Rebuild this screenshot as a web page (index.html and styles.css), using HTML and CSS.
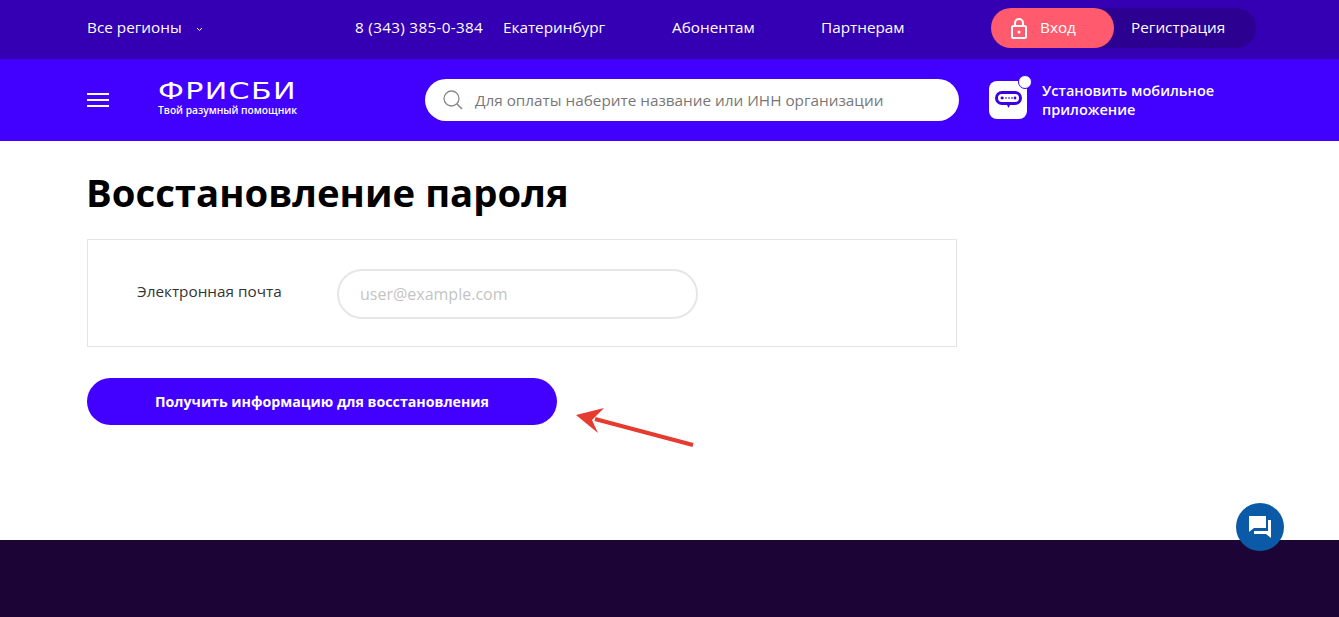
FILE: index.html
```html
<!DOCTYPE html>
<html lang="en">
<head>
    <meta charset="UTF-8">
    <meta name="viewport" content="width=device-width, initial-scale=1.0">
    <title>Восстановление пароля</title>
    <link rel="stylesheet" href="styles.css">
</head>
<body>
    <div class="topbar">
        <a class="region">Все регионы
            <svg class="chevron" width="7" height="5" viewBox="0 0 7 5"><path d="M1 1l2.5 2.5L6 1" fill="none" stroke="#fff" stroke-width="1"/></svg>
        </a>
        <a class="phone">8 (343) 385-0-384</a>
        <a class="city">Екатеринбург</a>
        <a class="top-link subscribers">Абонентам</a>
        <a class="top-link partners">Партнерам</a>
        <div class="auth">
            <a class="login">
                <svg width="16" height="21" viewBox="0 0 16 21"><path d="M4 8V5a4 4 0 0 1 8 0v3" fill="none" stroke="#fff" stroke-width="2"/><rect x="1" y="8" width="14" height="12" rx="1.5" fill="none" stroke="#fff" stroke-width="2"/><circle cx="8" cy="14" r="1.5" fill="#fff"/></svg>
                <span class="login-text">Вход</span>
            </a>
            <a class="register">Регистрация</a>
        </div>
    </div>

    <div class="mainbar">
        <div class="burger"><span></span><span></span><span></span></div>
        <div class="logo">
            <div class="logo-name">ФРИСБИ</div>
            <div class="logo-sub">Твой разумный помощник</div>
        </div>
        <div class="search">
            <svg width="20" height="20" viewBox="0 0 20 20"><circle cx="8.5" cy="8.5" r="7.5" fill="none" stroke="#8a8a8a" stroke-width="1.3"/><path d="M14 14l5 5" stroke="#8a8a8a" stroke-width="1.6"/></svg>
            <span>Для оплаты наберите название или ИНН организации</span>
        </div>
        <div class="app">
            <div class="app-icon">
                <svg width="27" height="18" viewBox="0 0 27 18"><rect x="1.500" y="1.500" width="24" height="11" rx="5.500" fill="none" stroke="#3d00e0" stroke-width="3"/><path d="M7 7h13" stroke="#3d00e0" stroke-width="1" stroke-dasharray="2 1"/><circle cx="7" cy="7" r="1.400" fill="#3d00e0"/><circle cx="20" cy="7" r="1.400" fill="#3d00e0"/><path d="M11.500 13h4l-2 4z" fill="#3d00e0"/></svg>
                <i class="app-dot"></i>
            </div>
            <div class="app-text">Установить мобильное<br>приложение</div>
        </div>
    </div>

    <div class="content">
        <h1>Восстановление пароля</h1>
        <div class="form-box">
            <label class="field-label" for="email">Электронная почта</label>
            <input class="field-input" id="email" type="text" placeholder="user@example.com">
        </div>
        <button class="submit">Получить информацию для восстановления</button>
    </div>

    <div class="footer"></div>

    <svg class="arrow" width="130" height="50" viewBox="0 0 130 50"><path d="M122 38L24 12" stroke="#e53c2f" stroke-width="4"/><path d="M5 8L33 1L21 13L27 26z" fill="#e53c2f"/></svg>

    <div class="chat">
        <svg width="24" height="24" viewBox="0 0 24 24"><path d="M1 1h17v12H6l-5 4z" fill="#fff"/><path d="M20 5h3v18l-5-4H6v-3h14z" fill="#fff"/></svg>
    </div>
</body>
</html>
```

FILE: styles.css
```css
* {
    box-sizing: border-box;
}
html, body {
    height: 100%;
}
body {
    margin: 0;
    display: flex;
    flex-direction: column;
    min-height: 617px;
    background-color: #fff;
    color: #000;
    font-family: "Open Sans", "Noto Sans", sans-serif;
    position: relative;
    overflow: hidden;
}
.topbar {
    height: 59px;
    flex: none;
    display: flex;
    align-items: center;
    padding: 0 0 3px 87px;
    background-color: #3500b3;
    color: #fff;
    font-size: 15.3px;
}
.region, .phone, .city, .top-link, .register, .login-text {
    padding-bottom: 2px;
}
.region {
    width: 268px;
    flex: none;
}
.chevron {
    margin-left: 10px;
    vertical-align: 1px;
}
.phone {
    width: 148px;
    flex: none;
    letter-spacing: 0.3px;
}
.city {
    width: 169px;
    flex: none;
}
.top-link {
    width: 149px;
    flex: none;
}
.partners {
    width: 170px;
}
.auth {
    width: 265px;
    height: 40px;
    flex: none;
    display: flex;
    align-items: center;
    border-radius: 20px;
    background-color: #2c0091;
}
.login {
    width: 123px;
    height: 40px;
    display: flex;
    align-items: center;
    gap: 13px;
    padding-left: 20px;
    border-radius: 20px;
    background-color: #ff5a6e;
}
.register {
    margin-left: 17px;
}
.mainbar {
    height: 82px;
    flex: none;
    display: flex;
    align-items: center;
    padding-left: 87px;
    background-color: #4200ff;
    color: #fff;
}
.burger {
    width: 22px;
    margin-right: 49px;
    display: flex;
    flex-direction: column;
    gap: 4px;
}
.burger span {
    height: 2px;
    background-color: #fff;
}
.logo {
    width: 267px;
    flex: none;
    margin-top: -4px;
}
.logo-name {
    font-family: "DejaVu Sans", sans-serif;
    font-size: 23px;
    line-height: 25px;
    letter-spacing: 1px;
    transform: scaleX(1.31);
    transform-origin: left;
    white-space: nowrap;
}
.logo-sub {
    font-size: 10.2px;
    font-weight: 600;
    line-height: 13px;
    white-space: nowrap;
}
.search {
    width: 534px;
    height: 42px;
    flex: none;
    display: flex;
    align-items: center;
    gap: 12px;
    padding-left: 18px;
    border-radius: 21px;
    background-color: #fff;
    color: #777;
    font-size: 15.3px;
}
.app {
    display: flex;
    align-items: center;
    gap: 15px;
    margin-left: 30px;
}
.app-icon {
    width: 38px;
    height: 38px;
    display: flex;
    align-items: center;
    justify-content: center;
    border-radius: 8px;
    background-color: #fff;
    position: relative;
}
.app-dot {
    position: absolute;
    top: -6px;
    right: -5px;
    width: 14px;
    height: 14px;
    border-radius: 50%;
    background-color: #fff;
    border: 1px solid #4200ff;
}
.app-text {
    font-size: 14.5px;
    font-weight: 600;
    line-height: 19px;
}
.content {
    flex: 1;
    padding: 26px 0 0 87px;
}
h1 {
    margin: 0 0 22px;
    margin-left: -1px;
    font-size: 38.3px;
    font-weight: 700;
    line-height: 50px;
}
.form-box {
    width: 870px;
    height: 108px;
    display: flex;
    align-items: center;
    padding: 2px 0 0 49px;
    border: 1px solid #e4e4e4;
}
.field-label {
    width: 200px;
    flex: none;
    margin-bottom: 6px;
    font-size: 15.3px;
    color: #333;
}
.field-input {
    width: 361px;
    height: 50px;
    padding: 0 21px;
    border: 2px solid #e6e6e6;
    border-radius: 25px;
    outline: none;
    font-family: inherit;
    font-size: 16px;
}
.field-input::placeholder {
    color: #c4c4c4;
}
.submit {
    display: block;
    width: 470px;
    height: 47px;
    margin-top: 31px;
    border: none;
    border-radius: 24px;
    background-color: #4200ff;
    color: #fff;
    font-family: inherit;
    font-size: 14.2px;
    font-weight: 700;
}
.footer {
    height: 77px;
    flex: none;
    background-color: #1c0536;
}
.arrow {
    position: absolute;
    left: 571px;
    top: 407px;
}
.chat {
    position: absolute;
    left: 1236px;
    top: 503px;
    width: 48px;
    height: 48px;
    display: flex;
    align-items: center;
    justify-content: center;
    border-radius: 50%;
    background-color: #0a5aa8;
}
```
